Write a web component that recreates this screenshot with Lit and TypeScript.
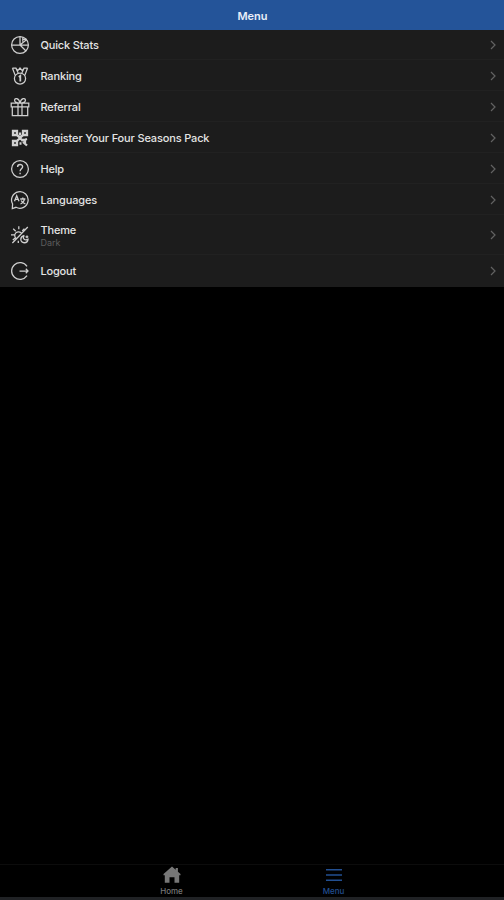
import { LitElement, html, css, svg } from "lit";
import { customElement } from "lit/decorators.js";

const icons = {
  stats: svg`<circle cx="10" cy="10" r="8.4"/><path d="M10 10H1.6M10 10V1.6M10 10l6 6M10 10l6.4-5.2M10 10h8.4"/><path d="M12.8 2.2v4.6M12.8 4.3h3.6"/>`,
  rank: svg`<circle cx="10" cy="12.6" r="5.6"/><path d="M2.4 2l2.8 7.4M5.8 2l2.4 5M17.6 2l-2.8 7.4M14.2 2l-2.4 5M2.4 2h3.4l2 2.6L10 2l2.2 2.6 2-2.6h3.4"/><path stroke-width="1.8" d="M8.8 11l1.5-1.1v5.6"/>`,
  gift: svg`<path d="M1.2 6.2h17.6v3.6H1.2zM2.3 9.8v8.7h15.4V9.8M8 6.2v12.3M12 6.2v12.3M10 6C7.5 5.9 4.6 5.2 4.6 3.2 4.6.8 8.8.7 10 6M10 6c2.5-.1 5.4-.8 5.4-2.8C15.4.8 11.2.7 10 6"/>`,
  code: svg`<g stroke-width="2.3"><path d="M3 3h4v4H3zM13 3h4v4h-4zM3 13h4v4H3z"/><path d="M7 7l6 6M13 7l-6 6M10 4.5v3M11 12h3l3-1M13 14l4 3.5M9.5 15.5h2M15 11v4"/></g>`,
  help: svg`<circle cx="10" cy="10" r="8.4"/><path stroke-width="1.4" d="M7.6 8c0-3.4 5-3.2 5-.3 0 2-2.5 2.1-2.5 4.5M10.1 13.7v1.5"/>`,
  lang: svg`<path d="M2.3 18.5l.3-4.5A8.3 8.3 0 1 1 6 17.3z"/><path stroke-width="1.3" d="M4.5 11.2l2.2-5.4 2.3 5.4M5.4 9.4h2.8M10.2 9h5.2M12.8 7.6V9M14.5 9c-.4 2.6-2 4.2-4 5M11.2 10.5c.8 1.8 2.3 3 4.2 3.4"/>`,
  theme: svg`<path d="M17.8 2L2.4 18M11.7 8.5A3.8 3.8 0 1 0 6.5 13.8M8.8 1.2v3M3.2 3.7l2.5 2.5M1 9.8h3.5M2.8 15l2.4-2M14.4 3.6l-2.2 2.3"/><path stroke-width="1.3" d="M14.3 10.3c-2.4 3 .4 5.7 3.7 4.1-.5 4.6-7.4 4.4-7.2-.3.1-2 1.5-3.3 3.5-3.8M15.5 11.8h2.8M17 10.4v2.8M8.3 15.8v2.2"/>`,
  logout: svg`<path d="M17 5.3A8.4 8.4 0 1 0 17 14.7M9.5 10H18M15.8 7.8L18 10l-2.2 2.2"/>`,
};

const rows: { icon: keyof typeof icons; label: string; note?: string }[] = [
  { icon: "stats", label: "Quick Stats" },
  { icon: "rank", label: "Ranking" },
  { icon: "gift", label: "Referral" },
  { icon: "code", label: "Register Your Four Seasons Pack" },
  { icon: "help", label: "Help" },
  { icon: "lang", label: "Languages" },
  { icon: "theme", label: "Theme", note: "Dark" },
  { icon: "logout", label: "Logout" },
];

@customElement("app-root")
export class AppRoot extends LitElement {
  static styles = css`
    :host {
      display: flex;
      flex-direction: column;
      height: 100vh;
      background: #000;
      color: #e4e4e4;
      font: 500 11px/14px Inter, "Liberation Sans", sans-serif;
    }
    header {
      height: 30px;
      box-sizing: border-box;
      padding: 2px 0 0 1px;
      display: grid;
      place-items: center;
      background: #245499;
      color: #e9effa;
      font-weight: 600;
    }
    .list {
      height: 257px;
      display: flex;
      flex-direction: column;
      background: #1c1c1c;
    }
    .row {
      height: 31px;
      box-sizing: border-box;
      display: flex;
      align-items: center;
      padding: 0 7px 0 10px;
      background: linear-gradient(#212121, #212121) 40px 100% / 100% 1px no-repeat;
    }
    .row:first-child {
      height: 30px;
    }
    .row:last-child {
      background: none;
    }
    .row.tall {
      height: 40px;
    }
    .row svg {
      fill: none;
      stroke: #d0d0d0;
      stroke-width: 1.25;
      flex: none;
    }
    .text {
      flex: 1;
      margin-left: 10.4px;
      letter-spacing: -0.15px;
    }
    .note {
      color: #5c5c5c;
      font-weight: 400;
      font-size: 9px;
      line-height: 11px;
      letter-spacing: 0;
    }
    .row .chevron {
      stroke: #626262;
      stroke-width: 1.2;
    }
    main {
      flex: 1;
    }
    nav {
      height: 33px;
      box-sizing: border-box;
      border-top: 1px solid #0c0c0c;
      display: flex;
      justify-content: center;
      padding-left: 1px;
    }
    .tab {
      width: 162px;
      display: flex;
      flex-direction: column;
      align-items: center;
      color: #777;
      font-size: 8px;
      line-height: 13px;
    }
    .tab.active {
      color: #224f91;
    }
    .tab svg {
      flex: none;
      fill: currentColor;
    }
    .foot {
      height: 3px;
      background: #202225;
    }
  `;

  render() {
    return html`
      <header>Menu</header>
      <div class="list">
        ${rows.map(
          (r) => html`<div class="row ${r.note ? "tall" : ""}">
            <svg width="20" height="20" viewBox="0 0 20 20">${icons[r.icon]}</svg>
            <div class="text">
              ${r.label}${r.note ? html`<div class="note">${r.note}</div>` : ""}
            </div>
            <svg class="chevron" width="8" height="10" viewBox="0 0 8 10"><path d="M2 1l4 4-4 4" /></svg>
          </div>`
        )}
      </div>
      <main></main>
      <nav>
        <div class="tab">
          <svg width="20" height="20" viewBox="0 0 20 20">
            <path d="M10 1.5l3.7 3.2V3h2.2v3.7L18.5 9v1.2h-1.3v7.6h-4.7v-5.6h-5v5.6H2.8v-7.6H1.5V9z" />
          </svg>
          Home
        </div>
        <div class="tab active">
          <svg width="20" height="20" viewBox="0 0 20 20">
            <path d="M2 4h16v1.4H2zM2 9.3h16v1.4H2zM2 14.6h16V16H2z" />
          </svg>
          Menu
        </div>
      </nav>
      <div class="foot"></div>
    `;
  }
}
